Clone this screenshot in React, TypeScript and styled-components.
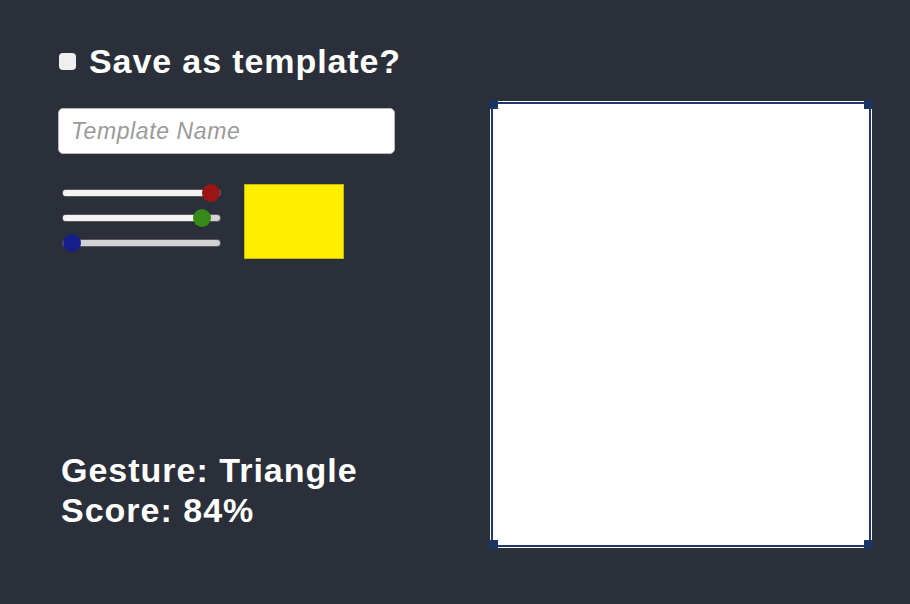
import styled, { createGlobalStyle } from "styled-components";

const GlobalStyle = createGlobalStyle`
  html, body {
    margin: 0;
    padding: 0;
    background: #2a2f3a;
  }
  body {
    font-family: "Liberation Sans", Arial, sans-serif;
  }
`;

const StPage = styled.div`
  display: flex;
  width: 910px;
  height: 604px;
  background-color: #2a2f3a;
  overflow: hidden;
`;

const StLeftColumn = styled.div`
  display: flex;
  flex-direction: column;
  width: 432px;
  padding: 44px 0 0 58px;
  box-sizing: border-box;
`;

const StHeaderRow = styled.label`
  display: flex;
  align-items: center;
  gap: 13px;
  height: 34px;
  color: #ffffff;
  font-size: 34px;
  font-weight: bold;
  letter-spacing: 0.9px;
  white-space: nowrap;
`;

const StCheckbox = styled.span`
  display: inline-block;
  flex: none;
  width: 17px;
  height: 17px;
  margin-left: 1px;
  border-radius: 4px;
  background-color: #efefef;
`;

const StNameInput = styled.input`
  width: 337px;
  height: 46px;
  margin-top: 30px;
  padding: 0 12px;
  box-sizing: border-box;
  border: 1px solid #b8b8b8;
  border-radius: 5px;
  background-color: #ffffff;
  font-family: "Liberation Sans", Arial, sans-serif;
  font-size: 23px;
  letter-spacing: 0.6px;
  outline: none;

  &::placeholder {
    color: #9a9a9a;
    font-style: italic;
  }
`;

const StColorRow = styled.div`
  display: flex;
  align-items: flex-start;
  gap: 24px;
  margin-top: 30px;
  padding-left: 5px;
`;

const StSliders = styled.div`
  display: flex;
  flex-direction: column;
  gap: 19px;
  padding-top: 6px;
`;

const StTrack = styled.div`
  position: relative;
  width: 157px;
  height: 6px;
  border-radius: 3px;
  background-color: #d2d2d2;
  box-shadow: 0 0 0 1px rgba(130, 130, 130, 0.5);
`;

const StFill = styled.div`
  height: 100%;
  border-radius: 3px;
  background-color: #f4f4f4;
`;

const StThumb = styled.div<{ $color: string }>`
  position: absolute;
  top: -6px;
  width: 18px;
  height: 18px;
  border-radius: 50%;
  background-color: ${({ $color }) => $color};
`;

const StSwatch = styled.div`
  width: 100px;
  height: 75px;
  box-sizing: border-box;
  border: 1px solid #c9b600;
  background-color: #ffee00;
`;

const StResult = styled.div`
  margin-top: 191px;
  padding-left: 3px;
  color: #ffffff;
  font-size: 34px;
  font-weight: bold;
  line-height: 40px;
  letter-spacing: 1px;
  white-space: nowrap;
`;

const StCanvasFrame = styled.div`
  position: relative;
  width: 384px;
  height: 449px;
  margin-top: 100px;
  margin-left: 57px;
`;

const StCanvas = styled.div`
  position: absolute;
  inset: 2px;
  background-color: #ffffff;
  border: 2px solid #1d3a6b;
  box-shadow: 0 0 0 1px #ffffff;
`;

const StCorner = styled.div<{ $top: boolean; $left: boolean }>`
  position: absolute;
  width: 9px;
  height: 9px;
  background-color: #1b3563;
  ${({ $top }) => ($top ? "top: 0;" : "bottom: 0;")}
  ${({ $left }) => ($left ? "left: 0;" : "right: 0;")}
`;

const sliders = [
  { color: "#9a1515", value: 1 },
  { color: "#378a18", value: 0.935 },
  { color: "#141f8c", value: 0 },
];

const Slider = ({ color, value }: { color: string; value: number }) => {
  const thumbLeft = value * (157 - 18);
  return (
    <StTrack>
      <StFill style={{ width: `${thumbLeft + 9}px` }} />
      <StThumb $color={color} style={{ left: `${thumbLeft}px` }} />
    </StTrack>
  );
};

const App = () => {
  return (
    <>
      <GlobalStyle />
      <StPage>
        <StLeftColumn>
          <StHeaderRow>
            <StCheckbox />
            <span>Save as template?</span>
          </StHeaderRow>
          <StNameInput placeholder="Template Name" />
          <StColorRow>
            <StSliders>
              {sliders.map((s, i) => (
                <Slider key={i} color={s.color} value={s.value} />
              ))}
            </StSliders>
            <StSwatch />
          </StColorRow>
          <StResult>
            <div>Gesture: Triangle</div>
            <div>Score: 84%</div>
          </StResult>
        </StLeftColumn>
        <StCanvasFrame>
          <StCanvas />
          <StCorner $top $left />
          <StCorner $top $left={false} />
          <StCorner $top={false} $left />
          <StCorner $top={false} $left={false} />
        </StCanvasFrame>
      </StPage>
    </>
  );
};

export default App;
